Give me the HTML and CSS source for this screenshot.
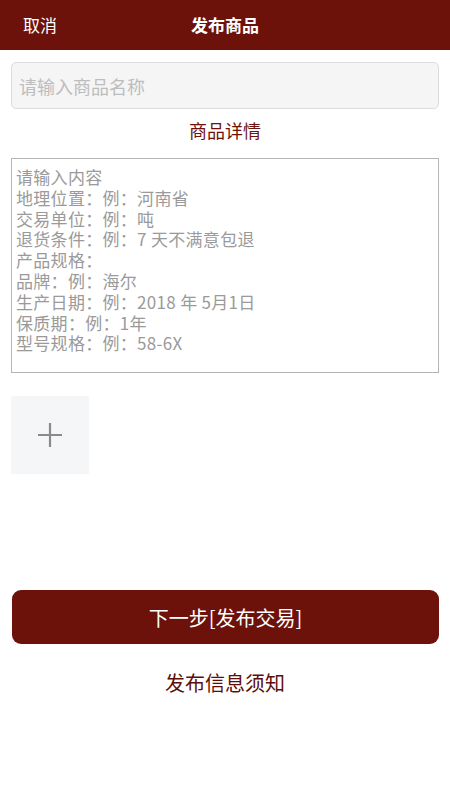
FILE: index.html
```html
<!DOCTYPE html>
<html lang="zh-CN">
<head>
    <meta charset="UTF-8">
    <meta name="viewport" content="width=device-width, initial-scale=1.0">
    <title>发布商品</title>
    <link rel="stylesheet" href="styles.css">
</head>
<body>
    <div class="header">
        <span class="cancel">取消</span>
        <span class="title">发布商品</span>
    </div>
    <div class="content">
        <input type="text" class="name-input" placeholder="请输入商品名称">
        <div class="section-title">商品详情</div>
        <textarea class="detail" placeholder="请输入内容
地理位置：例：河南省
交易单位：例：吨
退货条件：例：7 天不满意包退
产品规格：
品牌：例：海尔
生产日期：例：2018 年 5月1日
保质期：例：1年
型号规格：例：58-6X"></textarea>
        <div class="add-photo">
            <svg width="26" height="26" viewBox="0 0 26 26">
                <path d="M13 1v24M1 13h24" stroke="#8a8a8a" stroke-width="2.2" fill="none"/>
            </svg>
        </div>
        <button class="next-btn">下一步[发布交易]</button>
        <div class="notice">发布信息须知</div>
    </div>
</body>
</html>
```

FILE: styles.css
```css
body {
    margin: 0;
    font-family: "Noto Sans CJK SC", "Liberation Sans", sans-serif;
    background: #fff;
}
.header {
    height: 50px;
    background: #6c120b;
    color: #fff;
    display: flex;
    align-items: center;
    justify-content: center;
    position: relative;
}
.cancel {
    position: absolute;
    left: 23px;
    top: 12px;
    font-size: 17px;
    line-height: 26px;
}
.title {
    font-size: 17px;
    font-weight: bold;
    line-height: 26px;
}
.content {
    padding: 12px 11px 0;
    display: flex;
    flex-direction: column;
}
.name-input {
    height: 47px;
    box-sizing: border-box;
    border: 1px solid #dcdcdc;
    border-radius: 5px;
    background: #f5f5f5;
    padding: 0 7px;
    font-family: inherit;
    font-size: 18px;
    outline: none;
}
.name-input::placeholder {
    color: #bdbdbd;
}
.section-title {
    margin-top: 8px;
    text-align: center;
    color: #6c120b;
    font-size: 18px;
    line-height: 26px;
}
.detail {
    margin-top: 15px;
    height: 215px;
    box-sizing: border-box;
    border: 1px solid #b5b5b5;
    border-radius: 0;
    padding: 8px 4px;
    font-family: inherit;
    font-size: 17px;
    line-height: 20.8px;
    letter-spacing: 0.3px;
    resize: none;
    outline: none;
}
.detail::placeholder {
    color: #9a9a9a;
}
.add-photo {
    margin-top: 23px;
    width: 78px;
    height: 78px;
    background: #f5f6f8;
    display: flex;
    align-items: center;
    justify-content: center;
}
.next-btn {
    margin: 116px 0 0 1px;
    height: 54px;
    border: none;
    border-radius: 9px;
    background: #6c120b;
    color: #fff;
    font-family: inherit;
    font-size: 20px;
}
.notice {
    margin-top: 24px;
    text-align: center;
    color: #5c0e08;
    font-size: 20px;
    line-height: 30px;
}
```
